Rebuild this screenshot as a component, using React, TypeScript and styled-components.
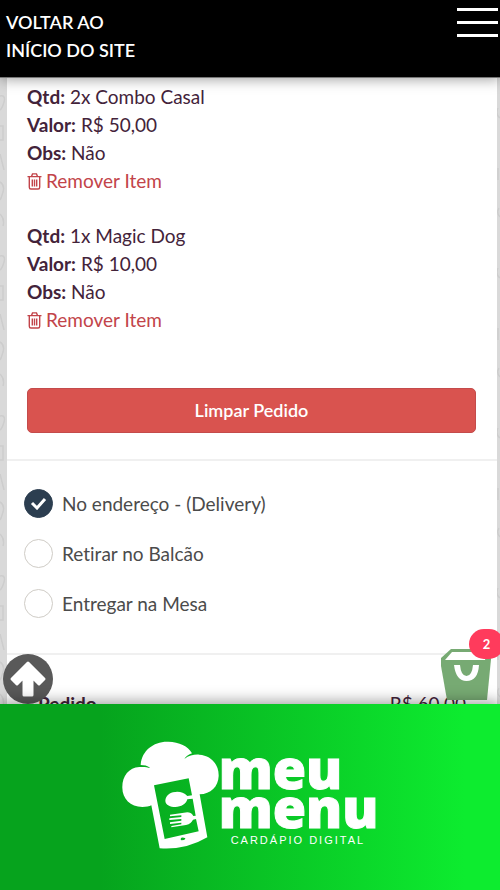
import React, { useState } from "react";
import styled, { createGlobalStyle } from "styled-components";

const GlobalStyle = createGlobalStyle`
  *, *::before, *::after { box-sizing: border-box; }
  body { margin: 0; font-family: Lato, "Open Sans", sans-serif; font-variant-ligatures: none; color: #43233a; background: #d9d9d9; }
  button, input { font: inherit; margin: 0; }
`;

const Shell = styled.div`
  height: 100vh;
  display: flex;
  flex-direction: column;
  overflow: hidden;
`;

const Header = styled.header`
  position: relative;
  z-index: 2;
  display: flex;
  justify-content: space-between;
  align-items: flex-start;
  padding: 8px 2px 13px 6px;
  background: #000;
  border-bottom: 1px solid #777;
  box-shadow: 0 2px 12px rgba(0, 0, 0, 0.35);
`;

const BackLink = styled.a`
  width: 140px;
  color: #fff;
  font-size: 18px;
  font-weight: 600;
  line-height: 28px;
  text-decoration: none;
`;

const MenuButton = styled.button`
  display: flex;
  flex-direction: column;
  gap: 10px;
  width: 41px;
  padding: 0;
  border: 0;
  background: none;
  cursor: pointer;
`;

const MenuBar = styled.span`
  height: 3px;
  background: #fff;
`;

const Stage = styled.div`
  position: relative;
  flex: 1;
  min-height: 0;
`;

const Wallpaper = styled.svg`
  position: absolute;
  inset: 0;
  width: 100%;
  height: 100%;
`;

const Scroller = styled.main`
  position: relative;
  height: 100%;
  padding: 0 3px 0 7px;
  overflow-y: auto;
  scrollbar-width: none;
`;

const Sheet = styled.div`
  background: #fff;
`;

const OrderSection = styled.section`
  padding: 5px 21px 26px 20px;
  border-bottom: 2px solid #f0f0f0;
`;

const ItemList = styled.div`
  display: flex;
  flex-direction: column;
  gap: 27px;
  margin-bottom: 54px;
`;

const Item = styled.article`
  font-size: 19px;
  line-height: 28px;
`;

const Line = styled.div``;

const RemoveButton = styled.button`
  display: flex;
  align-items: center;
  gap: 4px;
  padding: 0;
  border: 0;
  background: none;
  color: #c2444a;
  line-height: 28px;
  cursor: pointer;
`;

const ClearButton = styled.button`
  display: block;
  width: 100%;
  height: 45px;
  border: 1px solid #c44b4b;
  border-radius: 5px;
  background: #d9534f;
  padding: 0 0 1px;
  color: #fff;
  font-size: 18px;
  font-weight: 600;
  cursor: pointer;
`;

const Options = styled.fieldset`
  display: flex;
  flex-direction: column;
  gap: 21px;
  margin: 0;
  padding: 28px 17px 35px;
  border: 0;
  border-bottom: 2px solid #f0f0f0;
`;

const Option = styled.label`
  display: flex;
  align-items: center;
  gap: 9px;
  color: #4b4b4b;
  font-size: 19px;
  line-height: 29px;
  cursor: pointer;
`;

const RadioWrap = styled.span`
  display: grid;
  width: 29px;
  height: 29px;
  > * { grid-area: 1 / 1; }
`;

const Radio = styled.input`
  appearance: none;
  width: 29px;
  height: 29px;
  border: 1px solid #cfccc6;
  border-radius: 50%;
  background: #fff;
  &:checked { border-color: #2c3e50; background: #2c3e50; }
`;

const Check = styled.svg`
  place-self: center;
  pointer-events: none;
`;

const TotalRow = styled.div`
  display: flex;
  justify-content: space-between;
  padding: 35px 31px 28px;
  font-size: 19px;
  line-height: 28px;
`;

const UpButton = styled.button`
  position: absolute;
  left: 3px;
  bottom: 0;
  width: 50px;
  height: 50px;
  padding: 0;
  border: 0;
  border-radius: 50%;
  background: #595959;
  cursor: pointer;
  svg { display: block; }
`;

const CartButton = styled.button`
  position: absolute;
  right: 8px;
  bottom: 4px;
  padding: 0;
  border: 0;
  background: none;
  cursor: pointer;
  svg { display: block; }
`;

const Badge = styled.span`
  position: absolute;
  left: 28px;
  bottom: 41px;
  width: 35px;
  height: 30px;
  border-radius: 15px;
  background: #ff3b5c;
  color: #fff;
  font-size: 13px;
  font-weight: 700;
  line-height: 31px;
  text-align: center;
`;

const Footer = styled.footer`
  position: relative;
  z-index: 2;
  display: flex;
  justify-content: center;
  padding: 37px 0 41px;
  background: linear-gradient(90deg, #06a31d 20%, #0dec2f 93%);
  box-shadow: 0 -2px 14px rgba(0, 0, 0, 0.4);
  color: #fff;
`;

const Brand = styled.div`
  display: flex;
  flex-direction: column;
  padding-top: 8px;
`;

const BrandWord = styled.span`
  font-family: "Open Sans", sans-serif;
  font-size: 54px;
  font-weight: 800;
  line-height: 39px;
  -webkit-text-stroke: 1px #fff;
`;

const Tagline = styled.span`
  margin-top: 5px;
  padding-left: 12px;
  font-family: "Liberation Sans", Arial, sans-serif;
  font-size: 11px;
  line-height: 16px;
  letter-spacing: 2px;
`;

const TrashIcon = () => (
  <svg width="15" height="17" viewBox="0 0 15 17" fill="none" stroke="currentColor" strokeWidth="1.4" aria-hidden="true">
    <path d="M.5 3.6h14M4.5 3.4l1-2.500h4l1 2.500M2.300 4v10.200q0 1.800 1.600 1.800h7.200q1.600 0 1.600-1.800V4M5.300 6.500v7M7.500 6.500v7M9.700 6.500v7" />
  </svg>
);

const ChefLogo = () => (
  <svg width="97" height="108" viewBox="30 33 291 324" fill="#fff" role="img" aria-label="Meu Menu">
    <path
      fillRule="evenodd"
      d="M86 105C88 63 125 33 169 35C202 36 228 48 240 70C230 73 222 79 217 87C231 76 247 73 262 74C298 76 321 104 320 138C319 170 296 192 263 193L286 322Q220 361 143 355L118 226C112 230 102 231 91 231C55 230 31 206 31 173C30 139 50 113 82 111C95 110 105 111 115 114C106 107 96 105 86 105ZM126 166L230 145L240 196L226 198C214 186 199 183 183 187C169 191 160 201 160 213C161 226 175 231 190 231C208 230 222 223 226 208L242 206L251 257L244 258C239 249 233 247 226 247L174 254V259L208 256V261L172 265V270L208 267V272L174 277V282L208 278V283L178 288V292L222 285C234 282 239 277 243 269L252 267L260 304L158 327ZM206 327Q207 322 215 323Q222 323 219 328Q217 331 209 331Q206 331 206 327Z"
    />
  </svg>
);

const items = [
  { qty: "2x Combo Casal", value: "R$ 50,00" },
  { qty: "1x Magic Dog", value: "R$ 10,00" },
];

const options = ["No endereço - (Delivery)", "Retirar no Balcão", "Entregar na Mesa"];

export default function App() {
  const [selected, setSelected] = useState(0);
  return (
    <>
      <GlobalStyle />
      <Shell>
        <Header>
          <BackLink href="#">VOLTAR AO INÍCIO DO SITE</BackLink>
          <MenuButton aria-label="Menu">
            <MenuBar />
            <MenuBar />
            <MenuBar />
          </MenuButton>
        </Header>
        <Stage>
          <Wallpaper aria-hidden="true">
            <defs>
              <pattern id="doodles" width="500" height="160" patternUnits="userSpaceOnUse">
                <g fill="none" stroke="#cdcdcd" strokeWidth="1.5">
                  <path d="M0 18q6-1 4 6t-4 8M0 48h3v14H0M0 76l4 16M0 104q5 3 3 10t-3 8M0 136q5 5 3 12M498 30q-3 6 2 10M498 90v12M499 130q-3 5 1 9" />
                </g>
              </pattern>
            </defs>
            <rect width="100%" height="100%" fill="url(#doodles)" />
          </Wallpaper>
          <Scroller>
            <Sheet>
              <OrderSection>
                <ItemList>
                  {items.map((item) => (
                    <Item key={item.qty}>
                      <Line><b>Qtd:</b> {item.qty}</Line>
                      <Line><b>Valor:</b> {item.value}</Line>
                      <Line><b>Obs:</b> Não</Line>
                      <RemoveButton><TrashIcon />Remover Item</RemoveButton>
                    </Item>
                  ))}
                </ItemList>
                <ClearButton>Limpar Pedido</ClearButton>
              </OrderSection>
              <Options aria-label="Forma de entrega">
                {options.map((label, i) => (
                  <Option key={label}>
                    <RadioWrap>
                      <Radio type="radio" name="entrega" checked={selected === i} onChange={() => setSelected(i)} />
                      {selected === i && (
                        <Check width="17" height="13" viewBox="0 0 17 13" fill="none" stroke="#fff" strokeWidth="3">
                          <path d="M2 6l5 5L15 2" />
                        </Check>
                      )}
                    </RadioWrap>
                    {label}
                  </Option>
                ))}
              </Options>
              <TotalRow>
                <b>Pedido</b>
                <span>R$ 60,00</span>
              </TotalRow>
            </Sheet>
          </Scroller>
          <UpButton aria-label="Voltar ao topo">
            <svg width="50" height="50" viewBox="0 0 50 50" fill="#fff" stroke="#fff" strokeWidth="3" strokeLinejoin="round">
              <path d="M25 9L41 25L36 30L29 23V41H21V23L14 30L9 25Z" />
            </svg>
          </UpButton>
          <CartButton aria-label="Carrinho">
            <svg width="51" height="51" viewBox="0 0 51 51">
              <path d="M10 0H51L46 51H6L0 17V9Z" fill="#77aa73" />
              <path d="M11 3H46L44 11H4Z" fill="#fff" />
              <path d="M13 16H19Q20 27 25.500 27Q31 27 32 16H38Q37 32 25.500 32Q15 32 13 16Z" fill="#fff" />
            </svg>
            <Badge>2</Badge>
          </CartButton>
        </Stage>
        <Footer>
          <ChefLogo />
          <Brand>
            <BrandWord>meu</BrandWord>
            <BrandWord>menu</BrandWord>
            <Tagline>CARDÁPIO DIGITAL</Tagline>
          </Brand>
        </Footer>
      </Shell>
    </>
  );
}
